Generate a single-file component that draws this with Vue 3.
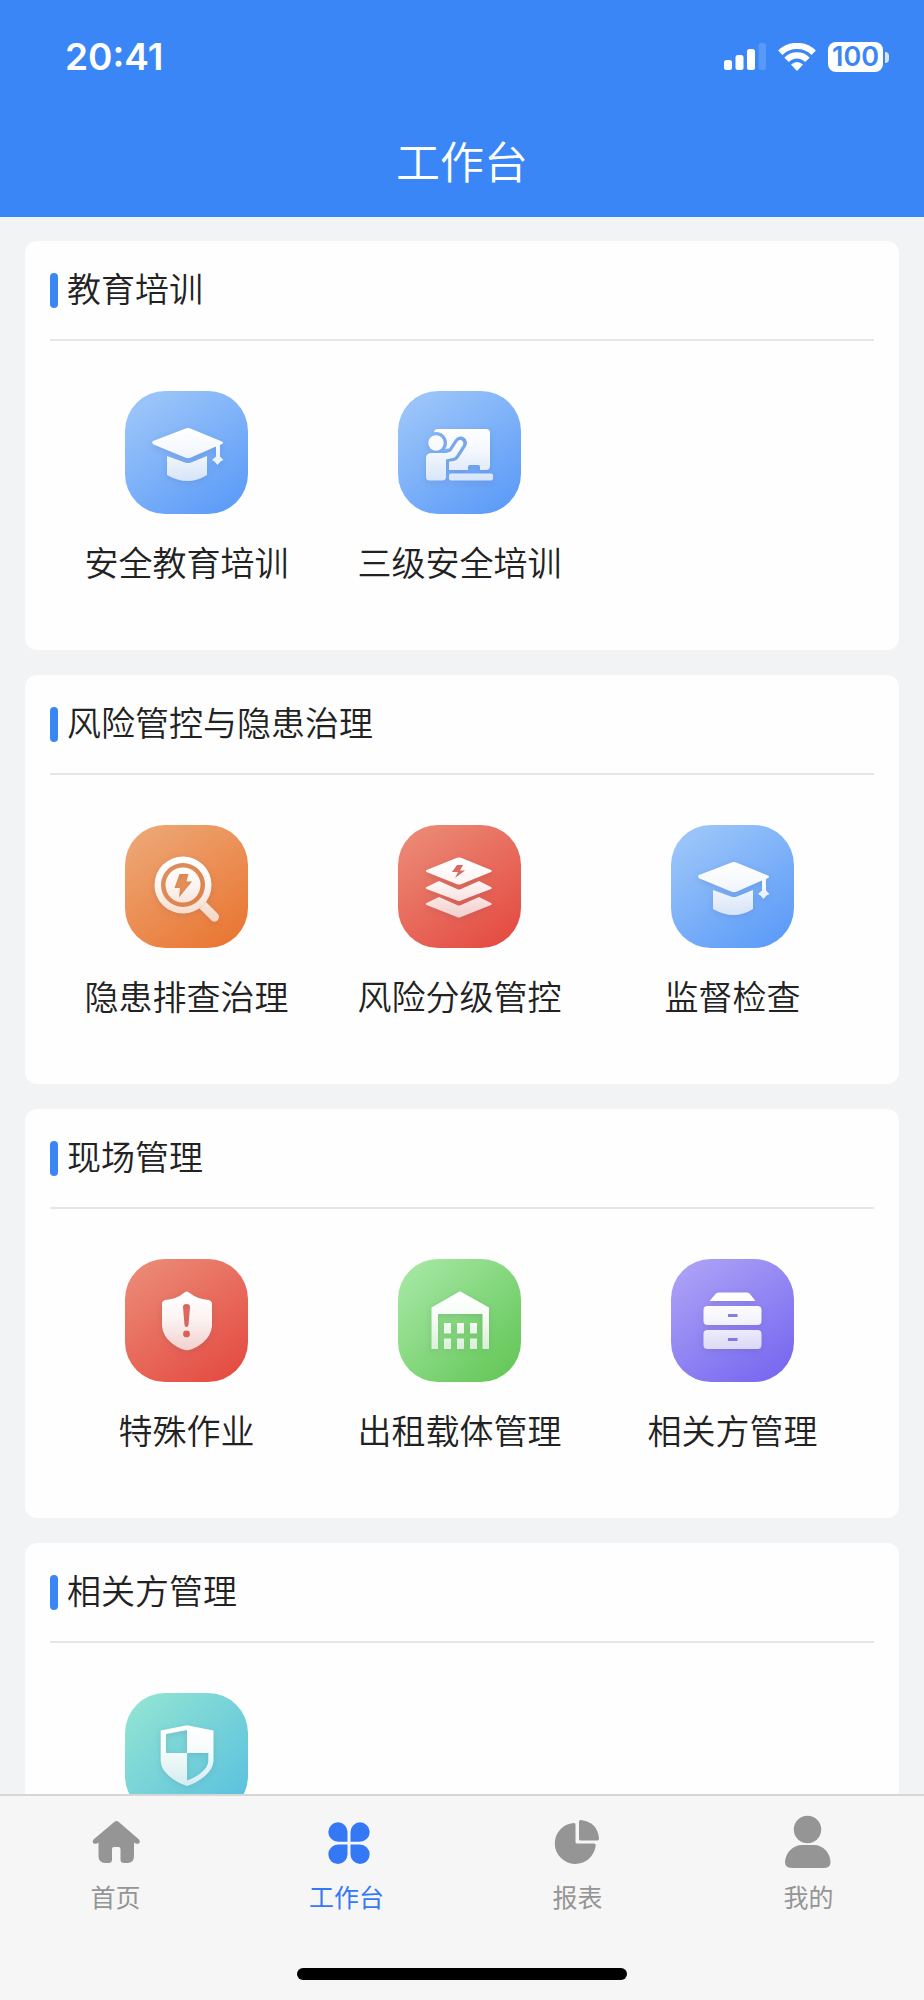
<script setup>
import { ref } from 'vue'

const sections = [
  {
    title: '教育培训',
    items: [
      { label: '安全教育培训', icon: 'cap', tone: 'blue' },
      { label: '三级安全培训', icon: 'board', tone: 'blue' },
    ],
  },
  {
    title: '风险管控与隐患治理',
    items: [
      { label: '隐患排查治理', icon: 'search', tone: 'orange' },
      { label: '风险分级管控', icon: 'layers', tone: 'red' },
      { label: '监督检查', icon: 'cap', tone: 'blue' },
    ],
  },
  {
    title: '现场管理',
    items: [
      { label: '特殊作业', icon: 'alert', tone: 'red' },
      { label: '出租载体管理', icon: 'garage', tone: 'green' },
      { label: '相关方管理', icon: 'cabinet', tone: 'purple' },
    ],
  },
  {
    title: '相关方管理',
    items: [{ label: '', icon: 'shield', tone: 'teal' }],
  },
]

const tabs = [
  { id: 'home', label: '首页' },
  { id: 'work', label: '工作台' },
  { id: 'report', label: '报表' },
  { id: 'mine', label: '我的' },
]
const active = ref('work')
</script>

<template>
  <div class="app">
    <svg class="defs" width="0" height="0" aria-hidden="true">
      <defs>
        <linearGradient id="glyph" gradientUnits="userSpaceOnUse" x1="0" y1="36" x2="0" y2="94">
          <stop offset="0" stop-color="#fff" />
          <stop offset="0.4" stop-color="#fff" stop-opacity="0.93" />
          <stop offset="1" stop-color="#fff" stop-opacity="0.7" />
        </linearGradient>
        <mask id="boardMask" maskUnits="userSpaceOnUse" x="0" y="0" width="123" height="123">
          <rect width="123" height="123" fill="#fff" />
          <circle cx="38" cy="52" r="11" fill="#000" />
          <path d="M26 59H51V80H26Z" fill="#000" />
          <path d="M44 65L55 63.500L62.500 52" fill="none" stroke="#000" stroke-width="13" stroke-linecap="round" stroke-linejoin="round" />
          <path d="M70 80V76Q70 74 72 74H80Q82 74 82 76V80Z" fill="#000" />
        </mask>
      </defs>
    </svg>

    <header class="top">
      <div class="status">
        <span class="time">20:41</span>
        <div class="indicators">
          <svg class="signal" width="42" height="28" viewBox="0 0 42 28" fill="#fff" aria-hidden="true">
            <rect x="0" y="17" width="8" height="10" rx="2.500" />
            <rect x="11.500" y="12" width="8" height="15" rx="2.500" />
            <rect x="23" y="6" width="8" height="21" rx="2.500" />
            <rect x="34.500" y="0" width="7.500" height="27" rx="2.500" opacity="0.16" />
          </svg>
          <svg class="wifi" width="38" height="28" viewBox="0 0 38 28" aria-hidden="true">
            <g fill="none" stroke="#fff" stroke-width="6.200">
              <path d="M2.300 9.700A24 24 0 0 1 35.700 9.700" />
              <path d="M8.600 16.800A14.300 14.300 0 0 1 29.400 16.800" />
            </g>
            <path d="M13 21.500Q19 16.500 25 21.500L20 27Q19 28 18 27Z" fill="#fff" />
          </svg>
          <div class="battery">
            <span class="level">100</span>
            <span class="nub"></span>
          </div>
        </div>
      </div>
      <h1 class="title">工作台</h1>
    </header>

    <main class="content">
      <section v-for="section in sections" :key="section.title" class="card">
        <h2 class="card-title">
          <span>{{ section.title }}</span>
        </h2>
        <div class="grid">
          <button
            v-for="item in section.items"
            :key="item.icon"
            type="button"
            class="item"
            :aria-label="item.label || section.title"
          >
            <span class="tile" :class="item.tone">
              <svg viewBox="0 0 123 123" fill="url(#glyph)" aria-hidden="true">
                <template v-if="item.icon === 'cap'">
                  <path d="M28 50L60 37.700Q63 36.500 66 37.700L97 50.500Q99 51.700 97 53L95 54V65.500L98.500 69L95.500 70.500L92.500 74L89.500 70.500L87 69L91 65.500V55.500L66 66.500Q63 68 60 66.500L28.500 53.500Q26 51.700 28 50Z" />
                  <path d="M42 65L60 71.500Q63 72.700 66 71.500L82 65V84Q63 96 42 84Z" />
                </template>
                <template v-else-if="item.icon === 'board'">
                  <circle cx="38" cy="52" r="7.700" />
                  <path d="M28 67Q28 62 34 62H48V86Q48 89.500 44 89.500H32Q28 89.500 28 86Z" />
                  <path d="M48 62L53 60.500L59.500 50.500Q62 48 64.500 50Q66 52 65 54L58 65Q57 66.500 55 67L48 68.500Z" />
                  <rect x="36" y="38" width="56" height="41" rx="4" mask="url(#boardMask)" />
                  <rect x="51" y="82.500" width="44" height="7" rx="2" />
                </template>
                <template v-else-if="item.icon === 'search'">
                  <path fill-rule="evenodd" d="M58 31.500a28.500 28.500 0 1 0 0 57a28.500 28.500 0 1 0 0 -57ZM58 38a22 22 0 1 1 0 44a22 22 0 1 1 0 -44Z" />
                  <path fill-rule="evenodd" d="M58 42.500a17.500 17.500 0 1 0 0 35a17.500 17.500 0 1 0 0 -35ZM54.500 49H63.500L61.500 56.500H67L54 72.500L55 63H49.500Z" />
                  <path d="M74.500 83.500L81 77L93 89Q95 92 93 95Q90 98 87 96Z" />
                </template>
                <template v-else-if="item.icon === 'layers'">
                  <path fill-rule="evenodd" d="M28.500 45L59 32.800Q61 32 63 32.800L93 45Q94.500 46 93 47L63 59.200Q61 60 59 59.200L28.500 47Q27 46 28.500 45ZM59 40L54 47H60L57 53L67 45.500H62L65 40Z" />
                  <path d="M28.500 62L41 56L59 64Q61 65 63 64L81 56L93 62Q94.500 63 93 64L63 75.500Q61 76.500 59 75.500L28.500 64Q27 63 28.500 62Z" />
                  <path d="M28.500 78L41 72L59 80Q61 81 63 80L81 72L93 78Q94.500 79 93 80L63 92Q61 93 59 92L28.500 80Q27 79 28.500 78Z" />
                </template>
                <template v-else-if="item.icon === 'alert'">
                  <path fill-rule="evenodd" d="M59.500 33.500Q62 31.500 64 33.500Q73 40.500 84 41Q87 42 87 45V67Q86 77 78 83.500Q71 89.500 64 91Q62 91.500 60 91Q53 89.500 46 83.500Q38 77 37 67V45Q37 42 40 41Q51 40.500 59.500 33.500ZM58 48Q58 45 61.500 45Q65 45 65 48L63.500 66Q63 68 61.500 68Q60 68 59.500 66ZM61.500 71.500a3.400 3.400 0 1 0 0 6.800a3.400 3.400 0 1 0 0 -6.800Z" />
                </template>
                <template v-else-if="item.icon === 'garage'">
                  <path d="M33.500 48.500L62 32.300L91 48.500V90H84.500V55H40V90H33.500Z" />
                  <path d="M46 64h7v10.500h-7ZM59 64h7v10.500h-7ZM72 64h7v10.500h-7ZM46 79.500h7v10.500h-7ZM59 79.500h7v10.500h-7ZM72 79.500h7v10.500h-7Z" />
                </template>
                <template v-else-if="item.icon === 'cabinet'">
                  <path d="M38.500 42L44.500 35Q45.500 33.500 47.500 33.500H76Q78 33.500 79 35L84.500 42Z" />
                  <path fill-rule="evenodd" d="M36.500 47H86.500Q90.500 47 90.500 51V62Q90.500 66 86.500 66H36.500Q32.500 66 32.500 62V51Q32.500 47 36.500 47ZM57 55V58H66.500V55Z" />
                  <path fill-rule="evenodd" d="M36.500 71H86.500Q90.500 71 90.500 75V86Q90.500 90 86.500 90H36.500Q32.500 90 32.500 86V75Q32.500 71 36.500 71ZM57 79V82H66.500V79Z" />
                </template>
                <template v-else>
                  <path fill-rule="evenodd" d="M62 32.300L88.500 37.500V68Q88 76 80 83Q71 90.500 62 93Q53 90.500 44 83Q36 76 35.700 68V37.500ZM62 37L41 41V60H62ZM62 60V87.500Q70 85 77 79Q83 74 83.300 68V60Z" />
                </template>
              </svg>
            </span>
            <span v-if="item.label" class="label">{{ item.label }}</span>
          </button>
        </div>
      </section>
    </main>

    <footer class="bottom">
      <nav class="tabs">
        <button
          v-for="tab in tabs"
          :key="tab.id"
          type="button"
          class="tab"
          :class="{ active: active === tab.id }"
          @click="active = tab.id"
        >
          <svg width="54" height="54" viewBox="0 0 54 54" fill="currentColor" aria-hidden="true">
            <path v-if="tab.id === 'home'" d="M25.500 6.800Q27.500 5 29.500 6.800L50 24.500Q51.800 26.500 50.300 28Q49 29.400 46.500 28.500L45 27.500V41Q45 48 38.500 48H35Q31.500 48 31.500 44.500V34Q31.500 32 29.500 32H25Q23 32 23 34V44.500Q23 48 19.500 48H16.500Q9.500 48 9.500 41V27.500L8 28.500Q5.500 29.400 4.200 28Q2.800 26.500 4.500 24.500Z" />
            <path v-else-if="tab.id === 'work'" d="M18 7.300A9.700 9.700 0 0 0 18 26.700H27.500V17A9.600 9.600 0 0 0 18 7.300ZM40 7.300A9.700 9.700 0 0 1 40 26.700H30.500V17A9.600 9.600 0 0 1 40 7.300ZM18 49A9.700 9.700 0 0 1 18 29.600H27.500V39.300A9.600 9.600 0 0 1 18 49ZM40 49A9.700 9.700 0 0 0 40 29.600H30.500V39.300A9.600 9.600 0 0 0 40 49Z" />
            <g v-else-if="tab.id === 'report'">
              <path d="M24.500 9.500V27Q24.500 28.500 26 28.500H43Q45 28.500 44.700 30.500A20.500 20.500 0 1 1 22.500 8Q24.500 7.700 24.500 9.500Z" />
              <path d="M28 6.500Q28 5 29.700 5Q46.500 7 48 23.500Q48 25.500 46.300 25.500H29.500Q28 25.500 28 24Z" />
            </g>
            <g v-else>
              <circle cx="25.500" cy="14.500" r="13.700" />
              <path d="M20 30H32C41 30 48.500 38 48.500 47.500Q48.500 53 41 53H11Q3 53 3 47.500C3 38 11 30 20 30Z" />
            </g>
          </svg>
          <span>{{ tab.label }}</span>
        </button>
      </nav>
      <div class="home-bar"></div>
    </footer>
  </div>
</template>

<style>
body {
  margin: 0;
}
</style>

<style scoped>
.app {
  display: flex;
  flex-direction: column;
  height: 100vh;
  overflow: hidden;
  background: #f2f3f5;
  color: #222;
  font-family: 'Noto Sans CJK SC', sans-serif;
  font-weight: 350;
}
.defs {
  position: absolute;
}
.top {
  flex: none;
  box-sizing: border-box;
  height: 217px;
  background: #3a86f7;
  color: #fff;
}
.status {
  display: flex;
  justify-content: space-between;
  align-items: center;
  height: 114px;
  padding: 0 35px 0 65px;
}
.time {
  font: 600 37px/44px Inter, 'Liberation Sans', sans-serif;
}
.indicators {
  display: flex;
  align-items: center;
  gap: 12px;
}
.battery {
  display: flex;
  align-items: center;
  gap: 2px;
}
.level {
  width: 55px;
  height: 30px;
  border-radius: 8px;
  background: #fff;
  color: #3a86f7;
  text-align: center;
  font: 600 27px/30px Inter, 'Liberation Sans', sans-serif;
}
.nub {
  width: 4px;
  height: 11px;
  border-radius: 0 4px 4px 0;
  background: #d5e5fd;
}
.title {
  margin: 0;
  padding-top: 14px;
  text-align: center;
  font-size: 44px;
  line-height: 64px;
  font-weight: 350;
}
.content {
  flex: 1;
  min-height: 0;
  overflow-y: auto;
  scrollbar-width: none;
  display: flex;
  flex-direction: column;
  gap: 25px;
  padding: 24px 25px;
}
.card {
  flex: none;
  box-sizing: border-box;
  min-height: 409px;
  padding: 0 25px;
  border-radius: 12px;
  background: #fefefe;
}
.card-title {
  display: flex;
  align-items: center;
  gap: 9px;
  height: 98px;
  margin: 0;
  border-bottom: 2px solid #e4e6ea;
  font-size: 34px;
  line-height: 48px;
  font-weight: 350;
}
.card-title span {
  padding-bottom: 4px;
}
.card-title::before {
  content: '';
  width: 8px;
  height: 35px;
  border-radius: 4px;
  background: #3a86f7;
}
.grid {
  display: grid;
  grid-template-columns: repeat(3, 1fr);
  padding: 50px 5px 0 0;
}
.item {
  display: flex;
  flex-direction: column;
  align-items: center;
  gap: 24px;
  padding: 0;
  border: 0;
  background: none;
  color: inherit;
  font: inherit;
  cursor: pointer;
}
.tile {
  width: 123px;
  height: 123px;
  border-radius: 40px;
}
.tile svg {
  display: block;
  filter: drop-shadow(0 2px 3px rgba(40, 40, 80, 0.14));
}
.blue {
  background: linear-gradient(145deg, #9ac4f9 12%, #5a9af8 95%);
}
.orange {
  background: linear-gradient(145deg, #eda877 5%, #e97531 95%);
}
.red {
  background: linear-gradient(145deg, #eb8975 8%, #e44a41 95%);
}
.green {
  background: linear-gradient(135deg, #a3e6a1 10%, #64c758 93%);
}
.purple {
  background: linear-gradient(145deg, #aba1f6 8%, #7666f0 95%);
}
.teal {
  background: linear-gradient(135deg, #8fe2d4 10%, #5ac1de 93%);
}
.label {
  font-size: 34px;
  line-height: 48px;
  white-space: nowrap;
}
.bottom {
  flex: none;
  box-sizing: border-box;
  height: 206px;
  border-top: 2px solid #d6d6d6;
  background: #f6f6f6;
  display: flex;
  flex-direction: column;
  justify-content: space-between;
  align-items: center;
  padding: 19px 0 20px;
}
.tabs {
  display: grid;
  grid-template-columns: repeat(4, 1fr);
  width: 100%;
}
.tab {
  display: flex;
  flex-direction: column;
  align-items: center;
  gap: 9px;
  padding: 0;
  border: 0;
  background: none;
  color: #959595;
  font: 400 25px/36px 'Noto Sans CJK SC', sans-serif;
  cursor: pointer;
}
.tab.active {
  color: #3478f6;
}
.home-bar {
  width: 330px;
  height: 12px;
  border-radius: 6px;
  background: #000;
}
</style>
